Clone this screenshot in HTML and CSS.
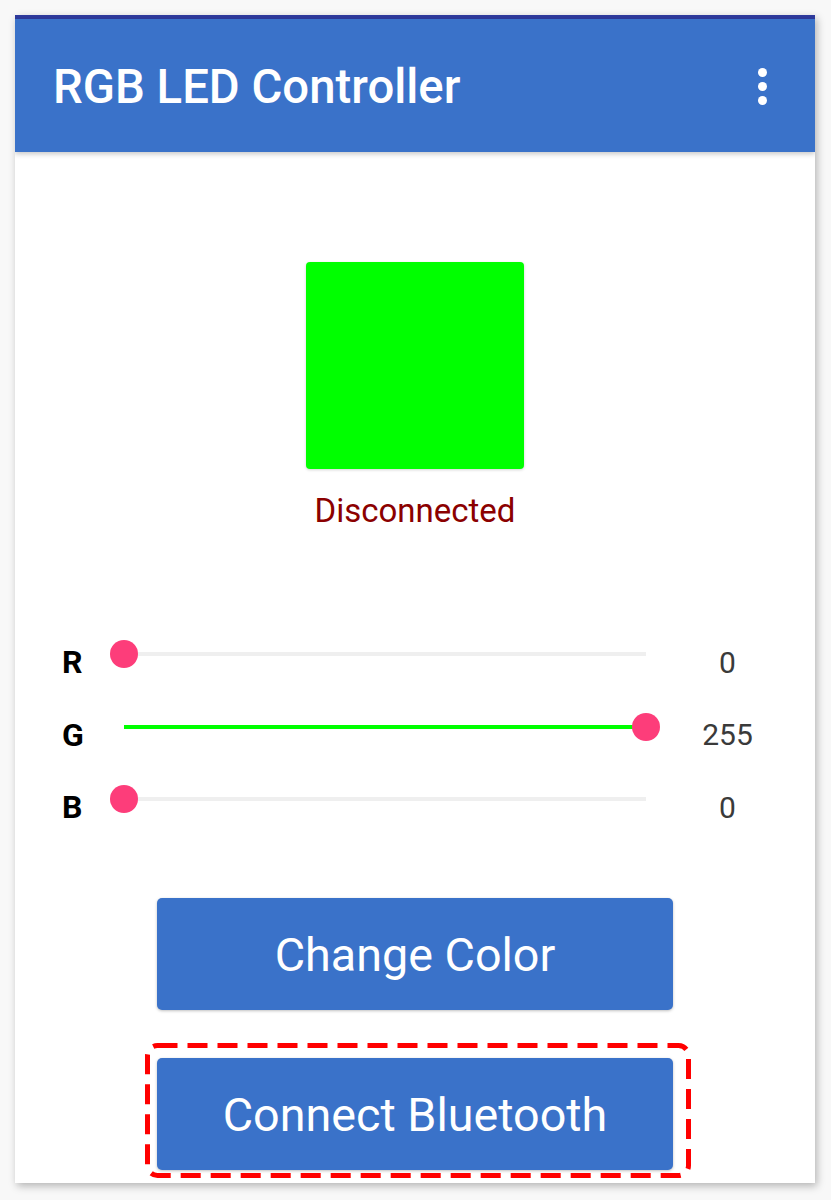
FILE: index.html
```html
<!DOCTYPE html>
<html>
<head>
<meta charset="utf-8">
<link rel="stylesheet" href="styles.css">
</head>
<body>
<div class="frame">
  <div class="status"></div>
  <header class="appbar">
    <h1 class="title">RGB LED Controller</h1>
    <div class="menu"><span></span><span></span><span></span></div>
  </header>
  <main class="content">
    <div class="swatch"></div>
    <div class="state">Disconnected</div>
    <div class="sliders">
      <div class="row">
        <div class="label">R</div>
        <div class="track"><div class="fill" style="width:0%"></div><div class="thumb" style="left:0%"></div></div>
        <div class="value">0</div>
      </div>
      <div class="row">
        <div class="label">G</div>
        <div class="track"><div class="fill" style="width:100%"></div><div class="thumb" style="left:100%"></div></div>
        <div class="value">255</div>
      </div>
      <div class="row">
        <div class="label">B</div>
        <div class="track"><div class="fill" style="width:0%"></div><div class="thumb" style="left:0%"></div></div>
        <div class="value">0</div>
      </div>
    </div>
    <div class="buttons">
      <button class="btn">Change Color</button>
      <div class="highlight">
        <button class="btn">Connect Bluetooth</button>
        <svg class="dash" viewBox="0 0 546 135" width="546" height="135"><rect x="2.5" y="2.5" width="541" height="130" rx="10" ry="10" fill="none" stroke="#ff0000" stroke-width="5" stroke-dasharray="20 10"/></svg>
      </div>
    </div>
  </main>
</div>
</body>
</html>
```
FILE: styles.css
```css
* { box-sizing: border-box; }
html, body { margin: 0; padding: 0; }
body {
  background: #f8f8f8;
  font-family: Roboto, "Noto Sans", sans-serif;
  padding: 15px 16px 0 15px;
  width: 831px;
  height: 1200px;
  overflow: hidden;
}
.frame {
  width: 800px;
  height: 1168px;
  background: #ffffff;
  box-shadow: 2px 3px 8px rgba(0,0,0,0.28);
  display: flex;
  flex-direction: column;
  overflow: hidden;
}
.status { height: 4px; background: #2e3a9c; }
.appbar {
  height: 133px;
  background: #3a72c9;
  display: flex;
  align-items: center;
  justify-content: space-between;
  padding: 0 48px 0 38px;
  box-shadow: 0 2px 5px rgba(0,0,0,0.22);
  position: relative;
  z-index: 1;
}
.title {
  margin: 0;
  color: #fff;
  font-size: 47.3px;
  font-weight: 500;
  letter-spacing: 0;
  padding-top: 2px;
}
.menu { display: flex; flex-direction: column; gap: 5px; padding-top: 2px; }
.menu span { width: 9px; height: 9px; border-radius: 50%; background: #fff; display: block; }
.content {
  flex: 1;
  display: flex;
  flex-direction: column;
  align-items: center;
  padding-top: 110px;
}
.swatch {
  width: 218px;
  height: 207px;
  background: #00ff00;
  border-radius: 4px;
  box-shadow: 0 1px 3px rgba(0,0,0,0.18);
}
.state {
  margin-top: 22px;
  color: #8b0000;
  font-size: 33px;
  line-height: 40px;
}
.sliders {
  margin-top: 95px;
  width: 100%;
  display: flex;
  flex-direction: column;
}
.row {
  height: 72.5px;
  display: grid;
  grid-template-columns: 62px 522px 1fr;
  align-items: center;
  padding-left: 47px;
}
.label {
  font-size: 32px;
  font-weight: 700;
  color: #000;
}
.track {
  position: relative;
  height: 4px;
  background: #efefef;
  margin-bottom: 16px;
}
.fill { height: 4px; background: #00ff00; }
.thumb {
  position: absolute;
  top: 50%;
  width: 28px;
  height: 28px;
  margin: -14px 0 0 -14px;
  border-radius: 50%;
  background: #fd3d7a;
}
.value {
  font-size: 30px;
  color: #3a3a3a;
  text-align: center;
  padding-right: 6px;
}
.buttons {
  margin-top: 54px;
  display: flex;
  flex-direction: column;
  align-items: center;
  gap: 48px;
}
.btn {
  width: 516px;
  height: 112px;
  border: none;
  border-radius: 5px;
  background: #3a72c9;
  color: #fff;
  font-family: Roboto, "Noto Sans", sans-serif;
  font-size: 46.7px;
  box-shadow: 0 1px 3px rgba(0,0,0,0.25);
  display: block;
  padding: 3px 0 0;
}
.highlight { position: relative; }
.dash {
  position: absolute;
  left: -12px;
  top: -15px;
}
```
